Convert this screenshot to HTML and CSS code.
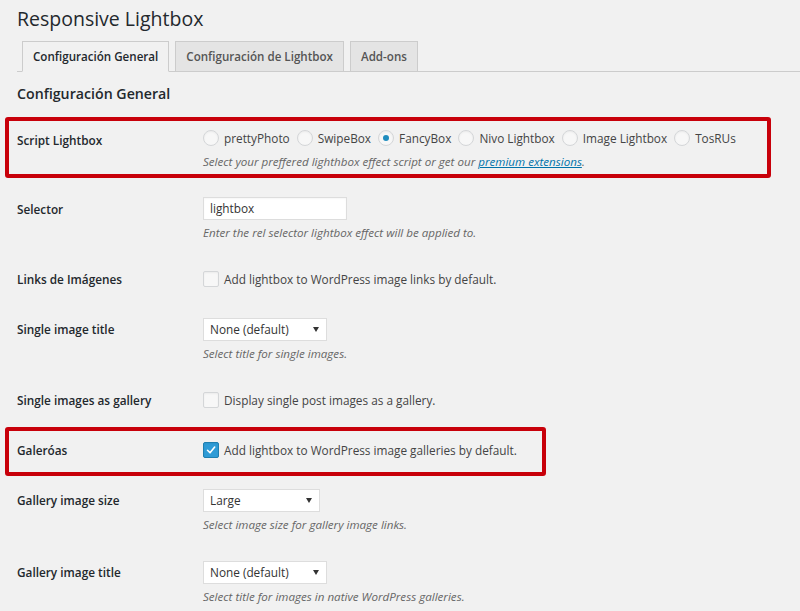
FILE: index.html
```html
<!DOCTYPE html>
<html lang="es">
<head>
<meta charset="utf-8">
<title>Responsive Lightbox</title>
<link rel="stylesheet" href="styles.css">
</head>
<body>
<div class="wrap">
  <h1 class="title">Responsive Lightbox</h1>
  <nav class="tabs">
    <span class="tab active">Configuración General</span>
    <span class="tab">Configuración de Lightbox</span>
    <span class="tab">Add-ons</span>
  </nav>
  <h2 class="section">Configuración General</h2>

  <div class="highlight hl-wide">
    <div class="row row-1">
      <div class="label lp-2">Script Lightbox</div>
      <div class="field">
        <div class="line radios">
          <span class="opt"><span class="radio"></span>prettyPhoto</span>
          <span class="opt"><span class="radio"></span>SwipeBox</span>
          <span class="opt"><span class="radio checked"></span>FancyBox</span>
          <span class="opt"><span class="radio"></span>Nivo Lightbox</span>
          <span class="opt"><span class="radio"></span>Image Lightbox</span>
          <span class="opt"><span class="radio"></span>TosRUs</span>
        </div>
        <p class="desc d-4">Select your preffered lighthbox effect script or get our <a class="link" href="#">premium extensions</a>.</p>
      </div>
    </div>
  </div>

  <div class="row row-2">
    <div class="label lp-2">Selector</div>
    <div class="field">
      <div class="input">lightbox</div>
      <p class="desc">Enter the rel selector lightbox effect will be applied to.</p>
    </div>
  </div>

  <div class="row row-3">
    <div class="label">Links de Imágenes</div>
    <div class="field">
      <div class="line"><span class="check"></span>Add lightbox to WordPress image links by default.</div>
    </div>
  </div>

  <div class="row row-4">
    <div class="label lp-1">Single image title</div>
    <div class="field">
      <div class="select w124">None (default)<span class="arrow"></span></div>
      <p class="desc">Select title for single images.</p>
    </div>
  </div>

  <div class="row row-5">
    <div class="label">Single images as gallery</div>
    <div class="field">
      <div class="line"><span class="check"></span>Display single post images as a gallery.</div>
    </div>
  </div>

  <div class="highlight hl-narrow">
    <div class="row row-6">
      <div class="label">Galeróas</div>
      <div class="field">
        <div class="line"><span class="check checked"><svg viewBox="0 0 16 16" width="16" height="16"><path d="M4 8.3 L6.9 11.2 L12.2 4.6" fill="none" stroke="#fff" stroke-width="1.8" stroke-linecap="round" stroke-linejoin="round"/></svg></span>Add lightbox to WordPress image galleries by default.</div>
      </div>
    </div>
  </div>

  <div class="row row-7">
    <div class="label lp-1">Gallery image size</div>
    <div class="field">
      <div class="select w117">Large<span class="arrow"></span></div>
      <p class="desc">Select image size for gallery image links.</p>
    </div>
  </div>

  <div class="row row-8">
    <div class="label lp-1">Gallery image title</div>
    <div class="field">
      <div class="select w124">None (default)<span class="arrow"></span></div>
      <p class="desc">Select title for images in native WordPress galleries.</p>
    </div>
  </div>
</div>
</body>
</html>
```
FILE: styles.css
```css
html, body {
  margin: 0;
  padding: 0;
  background: #f1f1f1;
}
body {
  font-family: "Open Sans", "Noto Sans", "Liberation Sans", sans-serif;
  font-size: 11.8px;
  color: #444;
  overflow: hidden;
}
.wrap {
  padding-left: 17px;
}
.title {
  margin: 5px 0 0 0;
  font-size: 19.5px;
  line-height: 28px;
  font-weight: 400;
  color: #23282d;
}
.tabs {
  margin-top: 8px;
  padding-left: 5px;
  border-bottom: 1px solid #ccc;
  display: flex;
  gap: 6px;
  height: 30px;
}
.tab {
  display: block;
  box-sizing: border-box;
  height: 31px;
  padding: 5px 10px;
  line-height: 19px;
  border: 1px solid #ccc;
  background: #e4e4e4;
  color: #555;
  font-weight: 600;
  font-size: 11.6px;
  white-space: nowrap;
}
.tab.active {
  background: #f1f1f1;
  border-bottom-color: #f1f1f1;
  color: #23282d;
}
.section {
  margin: 12px 0 13px 0;
  font-size: 14.2px;
  line-height: 20px;
  font-weight: 600;
  color: #23282d;
}
.highlight {
  box-sizing: border-box;
  margin-left: -12px;
  padding-left: 8px;
  border: 4px solid #c8000a;
  border-radius: 3px;
}
.hl-wide { width: 766px; }
.hl-narrow { width: 541px; margin-top: 17px; }
.row {
  display: flex;
  align-items: flex-start;
}
.label {
  width: 186px;
  flex: none;
  line-height: 20px;
  font-weight: 600;
  color: #23282d;
}
.lp-1 { padding-top: 1px; }
.lp-2 { padding-top: 2px; }
.field {
  flex: 1;
}
.row-1 { padding: 7px 0 2px 0; }
.row-2 { padding-top: 19px; }
.row-3 { padding-top: 26px; }
.row-4 { padding-top: 29px; }
.row-5 { padding-top: 26px; }
.row-6 { padding: 9px 0 12px 0; }
.row-7 { padding-top: 13px; }
.row-8 { padding-top: 26px; }
.line {
  display: flex;
  align-items: center;
  height: 20px;
  line-height: 20px;
  color: #444;
  white-space: nowrap;
}
.radios {
  gap: 7px;
}
.opt {
  display: flex;
  align-items: center;
  gap: 5px;
}
.radio {
  box-sizing: border-box;
  width: 16px;
  height: 16px;
  border-radius: 50%;
  border: 1px solid #d4d6d8;
  background: #f7f7f7;
  box-shadow: inset 0 1px 2px rgba(0,0,0,0.05);
  display: flex;
  align-items: center;
  justify-content: center;
}
.radio.checked::after {
  content: "";
  width: 6px;
  height: 6px;
  border-radius: 50%;
  background: #1e8cbe;
}
.check {
  box-sizing: border-box;
  width: 16px;
  height: 16px;
  margin-right: 5px;
  border: 1px solid #d4d6d8;
  border-radius: 2px;
  background: #f7f7f7;
  box-shadow: inset 0 1px 2px rgba(0,0,0,0.05);
  flex: none;
}
.check.checked {
  background: #2e9bd6;
  border-color: #1e7fb0;
  display: flex;
  align-items: center;
  justify-content: center;
}
.check.checked svg {
  display: block;
}
.desc {
  margin: 3px 0 0 0;
  line-height: 20px;
  font-size: 11.6px;
  font-style: italic;
  color: #666;
  white-space: nowrap;
}
.d-4 { margin-top: 4px; }
.link {
  color: #0073aa;
  text-decoration: underline;
}
.input {
  box-sizing: border-box;
  width: 144px;
  height: 23px;
  padding: 0 6px;
  line-height: 21px;
  border: 1px solid #dddddd;
  background: #fff;
  box-shadow: inset 0 1px 2px rgba(0,0,0,0.04);
  color: #333;
}
.select {
  box-sizing: border-box;
  height: 23px;
  padding: 0 6px;
  line-height: 21px;
  border: 1px solid #dddddd;
  background: #fff;
  color: #333;
  display: flex;
  align-items: center;
  justify-content: space-between;
}
.w124 { width: 124px; }
.w117 { width: 117px; }
.arrow {
  width: 0;
  height: 0;
  margin-right: 1px;
  border-left: 3px solid transparent;
  border-right: 3px solid transparent;
  border-top: 5px solid #333;
}
```
